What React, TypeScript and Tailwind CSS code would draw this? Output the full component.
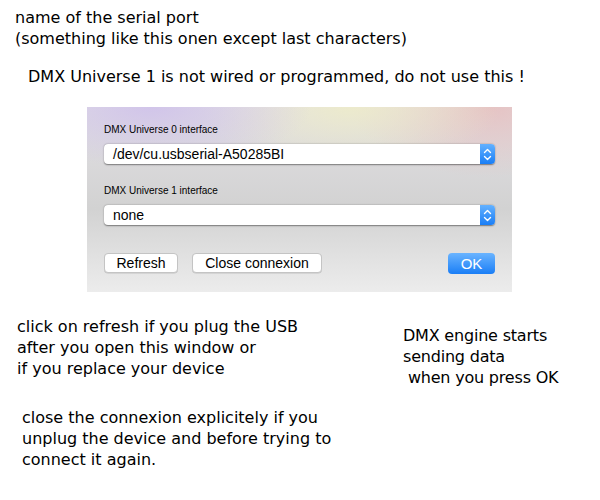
import React from "react";

const note = "font-['DejaVu_Sans',Verdana,sans-serif] text-[16px] leading-[21px] text-black";
const ui = "font-['Liberation_Sans',Helvetica,Arial,sans-serif] text-black";

function Stepper() {
  return (
    <div className="flex h-full w-[15px] items-center justify-center rounded-r-[4px] bg-[linear-gradient(to_bottom,#63b1ff,#1a7ef6)]">
      <svg width="9" height="13" viewBox="0 0 9 13" fill="none" stroke="white" strokeWidth="1.4" strokeLinecap="round" strokeLinejoin="round">
        <path d="M1.5 4.5 L4.5 1.5 L7.5 4.5" />
        <path d="M1.5 8.5 L4.5 11.5 L7.5 8.5" />
      </svg>
    </div>
  );
}

function Select({ value }: { value: string }) {
  return (
    <div className="flex h-[20px] items-stretch rounded-[4px] bg-white shadow-[0_0.5px_1.5px_rgba(0,0,0,0.45)]">
      <div className={`${ui} flex-1 pl-[9px] text-[14px] leading-[20px]`}>{value}</div>
      <Stepper />
    </div>
  );
}

function Btn({ label, cls }: { label: string; cls: string }) {
  return (
    <button className={`${ui} ${cls} block h-[20px] rounded-[4px] border border-[#c4c4c4] bg-white text-[14px] leading-[18px] shadow-[0_0.5px_0.5px_rgba(0,0,0,0.15)]`}>
      {label}
    </button>
  );
}

function Dialog() {
  return (
    <div className="ml-[87px] mt-[20px] h-[185px] w-[425px] bg-[radial-gradient(ellipse_160px_60px_at_15%_0%,rgba(205,190,235,0.8),transparent),radial-gradient(ellipse_150px_60px_at_62%_0%,rgba(238,236,200,0.85),transparent),radial-gradient(ellipse_140px_70px_at_95%_0%,rgba(230,190,190,0.85),transparent),linear-gradient(to_bottom,#e2e0e4,#d2d2d2_55%,#ececec)] px-[17px] pt-[17px]">
      <div className={`${ui} text-[10px] leading-[12px]`}>DMX Universe 0 interface</div>
      <div className="mt-[8px]">
        <Select value="/dev/cu.usbserial-A50285BI" />
      </div>
      <div className={`${ui} mt-[21px] text-[10px] leading-[12px]`}>DMX Universe 1 interface</div>
      <div className="mt-[8px]">
        <Select value="none" />
      </div>
      <div className="mt-[28px] flex items-start">
        <Btn label="Refresh" cls="w-[74px]" />
        <Btn label="Close connexion" cls="ml-[14px] w-[130px]" />
        <button className={`${ui} ml-auto block h-[21px] w-[47px] rounded-[4px] bg-[linear-gradient(to_bottom,#6ab4ff,#1a7ef6)] text-[15px] leading-[21px] text-white`}>
          OK
        </button>
      </div>
    </div>
  );
}

export default function App() {
  return (
    <div className="h-[500px] w-[600px] overflow-hidden bg-white">
      <div className={`${note} pl-[15px] pt-[7px]`}>
        <p>name of the serial port</p>
        <p>(something like this onen except last characters)</p>
      </div>
      <p className={`${note} mt-[17px] pl-[28px]`}>DMX Universe 1 is not wired or programmed, do not use this !</p>
      <Dialog />
      <div className="mt-[24px] flex">
        <div className="w-[386px]">
          <div className={`${note} pl-[17px]`}>
            <p>click on refresh if you plug the USB</p>
            <p>after you open this window or</p>
            <p>if you replace your device</p>
          </div>
          <div className={`${note} mt-[28px] pl-[22px]`}>
            <p>close the connexion explicitely if you</p>
            <p>unplug the device and before trying to</p>
            <p>connect it again.</p>
          </div>
        </div>
        <div className={`${note} pt-[9px] pl-[17px] whitespace-pre tracking-[-0.2px]`}>
          <p>DMX engine starts</p>
          <p>sending data</p>
          <p> when you press OK</p>
        </div>
      </div>
    </div>
  );
}
